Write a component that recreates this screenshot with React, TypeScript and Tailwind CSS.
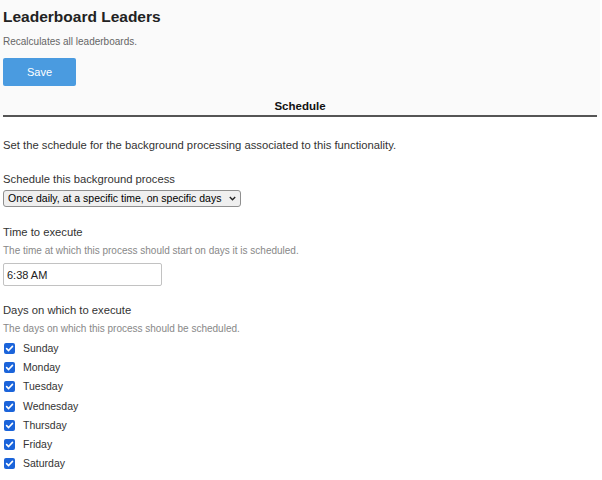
import { useState } from "react";

const DAYS = ["Sunday", "Monday", "Tuesday", "Wednesday", "Thursday", "Friday", "Saturday"];

function DayCheck({ label, checked, onToggle }: { label: string; checked: boolean; onToggle: () => void }) {
  return (
    <label className="flex h-[19.2px] items-center cursor-pointer" onClick={onToggle}>
      <span
        className={`ml-[1px] flex h-[11px] w-[11px] items-center justify-center rounded-[2px] ${
          checked ? "bg-[#1b64da]" : "border border-[#767676] bg-white"
        }`}
      >
        {checked && (
          <svg width="9" height="9" viewBox="0 0 10 10" fill="none">
            <path d="M1.8 5.2 L4 7.3 L8.3 2.6" stroke="white" strokeWidth="1.8" strokeLinecap="round" strokeLinejoin="round" />
          </svg>
        )}
      </span>
      <span className="ml-[8px] text-[10.5px] leading-[19.2px] text-[#333]">{label}</span>
    </label>
  );
}

export default function App() {
  const [days, setDays] = useState<boolean[]>(DAYS.map(() => true));
  const [time, setTime] = useState("6:38 AM");

  return (
    <div className="min-h-[480px] bg-white font-['Liberation_Sans',Arial,sans-serif]">
      <section className="w-[600px] bg-[#fafafa] px-[3px] pt-[7px]">
        <h1 className="text-[15.5px] font-bold leading-[20px] text-[#222]">Leaderboard Leaders</h1>
        <p className="mt-[9px] text-[10px] leading-[12px] text-[#666]">Recalculates all leaderboards.</p>
        <button className="mt-[10px] block h-[28px] w-[73px] rounded-[2px] bg-[#4a9be0] text-[11px] text-white">
          Save
        </button>
        <div className="mt-[13px] border-b-2 border-[#555] pb-[2px] text-center">
          <h2 className="text-[11.5px] font-bold leading-[14px] text-[#111]">Schedule</h2>
        </div>
      </section>

      <div className="px-[3px]">
        <p className="mt-[21px] text-[11.25px] leading-[14px] text-[#333]">
          Set the schedule for the background processing associated to this functionality.
        </p>

        <div className="mt-[20px] text-[11.25px] leading-[14px] text-[#333]">Schedule this background process</div>
        <div className="relative mt-[4px] w-[238px]">
          <select className="block h-[17px] w-full appearance-none rounded-[3px] border border-[#8f8f8f] bg-[#efefef] py-0 pl-[4px] text-[10.5px] leading-[15px] text-black">
            <option>Once daily, at a specific time, on specific days</option>
            <option>Every hour</option>
            <option>Never</option>
          </select>
          <svg
            className="pointer-events-none absolute right-[5px] top-[6px]"
            width="7"
            height="5"
            viewBox="0 0 7 5"
            fill="none"
          >
            <path d="M0.8 1 L3.5 3.7 L6.2 1" stroke="#222" strokeWidth="1.4" />
          </svg>
        </div>

        <div className="mt-[18px] text-[11.25px] leading-[14px] text-[#333]">Time to execute</div>
        <p className="mt-[6px] text-[10px] leading-[12px] text-[#888]">
          The time at which this process should start on days it is scheduled.
        </p>
        <input
          value={time}
          onChange={(e) => setTime(e.target.value)}
          className="mt-[6px] block h-[23px] w-[159px] rounded-[2px] border border-[#c2c2c2] bg-white pl-[3px] text-[11px] text-[#222] outline-none"
        />

        <div className="mt-[17px] text-[11.25px] leading-[14px] text-[#333]">Days on which to execute</div>
        <p className="mt-[6px] text-[10px] leading-[12px] text-[#888]">The days on which this process should be scheduled.</p>
        <div className="mt-[4px] flex flex-col">
          {DAYS.map((d, i) => (
            <DayCheck
              key={d}
              label={d}
              checked={days[i]}
              onToggle={() => setDays(days.map((v, j) => (j === i ? !v : v)))}
            />
          ))}
        </div>
      </div>
    </div>
  );
}
